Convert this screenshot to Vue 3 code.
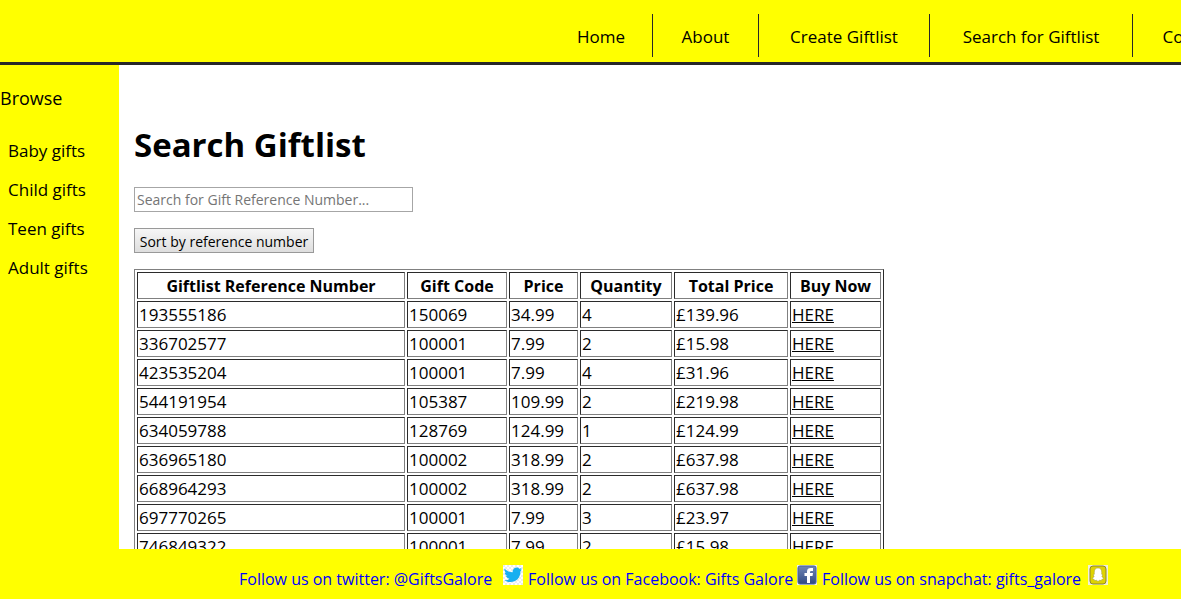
<script setup>
const navItems = ['Home', 'About', 'Create Giftlist', 'Search for Giftlist', 'Contact']
const categories = ['Baby gifts', 'Child gifts', 'Teen gifts', 'Adult gifts']
const columns = ['Giftlist Reference Number', 'Gift Code', 'Price', 'Quantity', 'Total Price', 'Buy Now']
const gifts = [
  ['193555186', '150069', '34.99', '4', '£139.96'],
  ['336702577', '100001', '7.99', '2', '£15.98'],
  ['423535204', '100001', '7.99', '4', '£31.96'],
  ['544191954', '105387', '109.99', '2', '£219.98'],
  ['634059788', '128769', '124.99', '1', '£124.99'],
  ['636965180', '100002', '318.99', '2', '£637.98'],
  ['668964293', '100002', '318.99', '2', '£637.98'],
  ['697770265', '100001', '7.99', '3', '£23.97'],
  ['746849322', '100001', '7.99', '2', '£15.98'],
]
</script>

<template>
  <div class="page">
    <header class="header">
      <nav class="nav">
        <a v-for="item in navItems" :key="item" href="#">{{ item }}</a>
      </nav>
    </header>
    <div class="body">
      <aside class="side">
        <h2>Browse</h2>
        <a v-for="c in categories" :key="c" href="#">{{ c }}</a>
      </aside>
      <main class="main">
        <h1>Search Giftlist</h1>
        <input class="search" type="text" aria-label="Gift reference number" placeholder="Search for Gift Reference Number..." />
        <button class="sort" type="button">Sort by reference number</button>
        <table class="list">
          <colgroup>
            <col class="c-ref" /><col class="c-code" /><col class="c-price" /><col class="c-qty" /><col class="c-total" /><col class="c-buy" />
          </colgroup>
          <thead>
            <tr><th v-for="c in columns" :key="c">{{ c }}</th></tr>
          </thead>
          <tbody>
            <tr v-for="g in gifts" :key="g[0]">
              <td v-for="(v, i) in g" :key="i">{{ v }}</td>
              <td><a href="#">HERE</a></td>
            </tr>
          </tbody>
        </table>
      </main>
    </div>
    <footer class="footer">
      <a href="#">Follow us on twitter: @GiftsGalore
        <svg viewBox="0 0 20 20" width="20" height="20">
          <defs>
            <pattern id="checks" width="4" height="4" patternUnits="userSpaceOnUse">
              <rect width="4" height="4" fill="#fff" />
              <path d="M0 0H2V2H0ZM2 2H4V4H2Z" fill="#ececec" />
            </pattern>
          </defs>
          <rect width="20" height="20" fill="url(#checks)" />
          <path d="M1.500 3.500C4 6.200 6.600 7.300 9.700 7.300C9.300 4.500 11.200 2.500 13.600 2.500C14.800 2.500 15.700 3 16.300 3.700L18.600 2.900L17.400 4.800L19 4.500L17.500 6.200C17.500 12.500 13.500 17 7.500 17C5.100 17 3 16.400 1.200 15.200C3.300 15.300 5 14.800 6.400 13.700C4.700 13.500 3.500 12.500 3 11.100H4.600C2.900 10.500 1.900 9.300 1.800 7.500L3.400 7.900C1.600 6.500 1.200 5 1.500 3.500Z" fill="#18aff0" />
        </svg>
      </a>
      <a href="#">Follow us on Facebook: Gifts Galore
        <svg viewBox="0 0 20 20" width="20" height="20">
          <defs>
            <linearGradient id="fb" x1="0" y1="0" x2="0" y2="1">
              <stop offset="0" stop-color="#7086b5" /><stop offset="1" stop-color="#314b83" />
            </linearGradient>
          </defs>
          <rect width="20" height="20" fill="#e9ecf3" />
          <rect x="1" y="1" width="18" height="18" rx="2" fill="url(#fb)" stroke="#49639b" />
          <path d="M10 18V11H7.500V8H10V6.500C10 4 11.500 3 13.800 3H16V6H14.500C13.500 6 13 6.300 13 7.200V8H16L15.500 11H13V18Z" fill="#fff" />
        </svg>
      </a>
      <a href="#">Follow us on snapchat: gifts_galore
        <svg viewBox="0 0 20 20" width="20" height="20">
          <rect width="20" height="20" fill="#f1f0dc" />
          <rect x="2" y="1" width="16" height="18" rx="3" fill="#dfd300" stroke="#8c8530" />
          <path d="M10 3C7.200 3 6.300 5 6.300 7.300V9.300L5 10L6.200 11C5.800 12.300 5 13 4 13.500L6.200 14.500L6.800 15.600L8.500 15.300L10 16.500L11.500 15.300L13.200 15.600L13.800 14.500L16 13.500C15 13 14.200 12.300 13.800 11L15 10L13.700 9.300V7.300C13.700 5 12.800 3 10 3Z" fill="#fff" stroke="#a39b42" stroke-width=".5" />
        </svg>
      </a>
    </footer>
  </div>
</template>

<style>
body { margin: 0; }
</style>

<style scoped>
.page {
  display: flex;
  flex-direction: column;
  height: 100vh;
  overflow: hidden;
  background: #fff;
  color: #000;
  font-family: "Comic Sans MS", "Open Sans", sans-serif;
  font-size: 16px;
  line-height: 23px;
}
a { color: inherit; text-decoration: none; }
.header {
  flex: none;
  padding: 14px 0 5px;
  background: #ff0;
  border-bottom: 3px solid #282828;
  overflow: hidden;
}
.nav {
  display: grid;
  grid-template-columns: 103px 106px 171px 203px 121px;
  margin-left: 550px;
}
.nav a {
  padding: 11px 0 9px;
  border-right: 1px solid #282828;
  font-size: 17px;
  text-align: center;
  white-space: nowrap;
}
.body { flex: 1; display: flex; min-height: 0; }
.side {
  flex: none;
  display: flex;
  flex-direction: column;
  gap: 16px;
  width: 119px;
  background: #ff0;
}
.side h2 { margin: 22px 0 13px; font-size: 18px; font-weight: 400; }
.side a { padding-left: 8px; font-size: 17px; }
.main {
  flex: 1;
  display: flex;
  flex-direction: column;
  align-items: flex-start;
  padding: 57px 15px 0;
  overflow: hidden;
}
h1 { margin: 0 0 20px; font-size: 33px; line-height: 45px; font-weight: 700; }
.search, .sort {
  flex: none;
  box-sizing: border-box;
  height: 25px;
  margin: 0 0 16px;
  border: 1px solid #a6a6a6;
  border-radius: 0;
  font-family: inherit;
  font-size: 14px;
}
.search { width: 279px; padding: 1px 2px; }
.search::placeholder { color: #757575; opacity: 1; }
.sort {
  width: 180px;
  padding: 1px 0 0;
  border-color: #999;
  background: linear-gradient(#f6f6f6, #dedede);
  color: #000;
  white-space: nowrap;
}
.list {
  flex: none;
  table-layout: fixed;
  width: 750px;
  border: 1px solid;
  border-color: #808080 #2b2b2b #2b2b2b #808080;
  border-collapse: separate;
  border-spacing: 2px;
}
.c-ref { width: 268px; }
.c-code { width: 100px; }
.c-price { width: 69px; }
.c-qty { width: 92px; }
.c-total { width: 114px; }
.c-buy { width: 91px; }
th, td {
  padding: 1px;
  border: 1px solid;
  border-color: #2b2b2b #808080 #808080 #2b2b2b;
  white-space: nowrap;
}
th { padding: 2px 1px 0; }
td { text-align: left; font-size: 17px; }
td a { text-decoration: underline; }
.footer {
  flex: none;
  box-sizing: border-box;
  display: grid;
  grid-template-columns: 284px 289px 286px;
  gap: 5px;
  height: 50px;
  padding: 16px 0 0 239px;
  background: #ff0;
  color: #00f;
  white-space: nowrap;
  overflow: hidden;
}
.footer a {
  display: flex;
  align-items: baseline;
  justify-content: space-between;
}
</style>
